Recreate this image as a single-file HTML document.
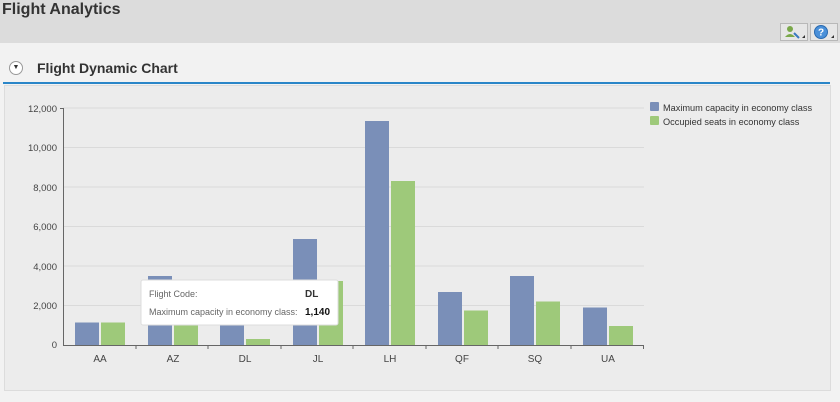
<!DOCTYPE html><html><head><style>
body{margin:0;width:840px;height:402px;background:#f2f2f2;font-family:"Liberation Sans",sans-serif;position:relative;overflow:hidden}
.hdr{position:absolute;left:0;top:0;width:840px;height:43px;background:#dcdcdc}
.hdr h1{margin:0;position:absolute;left:2px;top:1px;font-size:16px;font-weight:bold;color:#333}
.btn{position:absolute;top:23px;width:26px;height:16px;border:1px solid #b8b8b8;background:#e6e6e6}
.ttl{position:absolute;left:37px;top:60px;font-size:14px;font-weight:bold;color:#333}
.line{position:absolute;left:3px;top:82px;width:827px;height:2px;background:#2a86c8}
.panel{position:absolute;left:4px;top:85px;width:825px;height:304px;background:#ececec;border:1px solid #dcdcdc}
</style></head><body>
<div class="hdr"><h1>Flight Analytics</h1>
<div class="btn" style="left:780px"><svg width="26" height="16"><circle cx="9" cy="5" r="3" fill="#7aa84a"/><path d="M4 13 Q9 7 14 13 Z" fill="#7aa84a"/><path d="M13 9 L18 14" stroke="#3a7ac0" stroke-width="2"/><path d="M21 14 L24 14 L24 11 Z" fill="#333"/></svg></div>
<div class="btn" style="left:810px"><svg width="26" height="16"><circle cx="10" cy="8" r="6.5" fill="#4a90d9" stroke="#2a6ab0"/><text x="10" y="11.5" font-size="10" font-weight="bold" fill="#fff" text-anchor="middle" font-family="Liberation Sans">?</text><path d="M20 14 L23 14 L23 11 Z" fill="#333"/></svg></div>
</div>
<div style="position:absolute;left:9px;top:61px;width:12px;height:12px;border-radius:50%;border:1px solid #999;background:#fff;font-size:7px;text-align:center;line-height:12px;color:#333">▼</div>
<div class="ttl">Flight Dynamic Chart</div>
<div class="line"></div>
<div class="panel"></div>
<svg style="position:absolute;left:0;top:0" width="840" height="402" font-family="Liberation Sans" font-size="10" fill="#444">
<g stroke="#dadada"><line x1="63" x2="644" y1="108" y2="108"/><line x1="63" x2="644" y1="147.5" y2="147.5"/><line x1="63" x2="644" y1="187" y2="187"/><line x1="63" x2="644" y1="226.5" y2="226.5"/><line x1="63" x2="644" y1="266" y2="266"/><line x1="63" x2="644" y1="305.5" y2="305.5"/></g>
<g text-anchor="end" font-size="9.5"><text x="57" y="112">12,000</text><text x="57" y="151">10,000</text><text x="57" y="191">8,000</text><text x="57" y="230">6,000</text><text x="57" y="270">4,000</text><text x="57" y="309">2,000</text><text x="57" y="348">0</text></g>
<g fill="#7a8fb8">
<rect x="75" y="322.5" width="24" height="22.5"/><rect x="148" y="276" width="24" height="69"/><rect x="220" y="322.5" width="24" height="22.5"/><rect x="293" y="239" width="24" height="106"/><rect x="365" y="121" width="24" height="224"/><rect x="438" y="292" width="24" height="53"/><rect x="510" y="276" width="24" height="69"/><rect x="583" y="307.5" width="24" height="37.5"/></g>
<g fill="#9ec97a">
<rect x="101" y="322.5" width="24" height="22.5"/><rect x="174" y="325" width="24" height="20"/><rect x="246" y="339" width="24" height="6"/><rect x="319" y="281" width="24" height="64"/><rect x="391" y="181" width="24" height="164"/><rect x="464" y="310.5" width="24" height="34.5"/><rect x="536" y="301.5" width="24" height="43.5"/><rect x="609" y="326" width="24" height="19"/></g>
<g stroke="#666"><line x1="63" x2="644" y1="345.5" y2="345.5"/><line x1="63.5" x2="63.5" y1="108" y2="345"/><line x1="60" x2="63" y1="108.5" y2="108.5"/>
<line x1="136" x2="136" y1="345" y2="349"/><line x1="208" x2="208" y1="345" y2="349"/><line x1="281" x2="281" y1="345" y2="349"/><line x1="353" x2="353" y1="345" y2="349"/><line x1="426" x2="426" y1="345" y2="349"/><line x1="498" x2="498" y1="345" y2="349"/><line x1="571" x2="571" y1="345" y2="349"/><line x1="643.5" x2="643.5" y1="345" y2="349"/></g>
<g text-anchor="middle"><text x="100" y="362">AA</text><text x="173" y="362">AZ</text><text x="245" y="362">DL</text><text x="318" y="362">JL</text><text x="390" y="362">LH</text><text x="462" y="362">QF</text><text x="535" y="362">SQ</text><text x="608" y="362">UA</text></g>
<rect x="650" y="102" width="9" height="9" rx="1" fill="#7a8fb8"/><text x="663" y="111" fill="#333" font-size="9.2">Maximum capacity in economy class</text>
<rect x="650" y="116" width="9" height="9" rx="1" fill="#9ec97a"/><text x="663" y="125" fill="#333" font-size="9.2">Occupied seats in economy class</text>
<rect x="141" y="280" width="197" height="45" rx="2" fill="#fff" stroke="#ddd"/>
<text x="149" y="297" fill="#666" font-size="9">Flight Code:</text><text x="305" y="297" fill="#333" font-weight="bold">DL</text>
<text x="149" y="315" fill="#666" font-size="9">Maximum capacity in economy class:</text><text x="305" y="315" fill="#111" font-weight="bold">1,140</text>
</svg>
</body></html>
